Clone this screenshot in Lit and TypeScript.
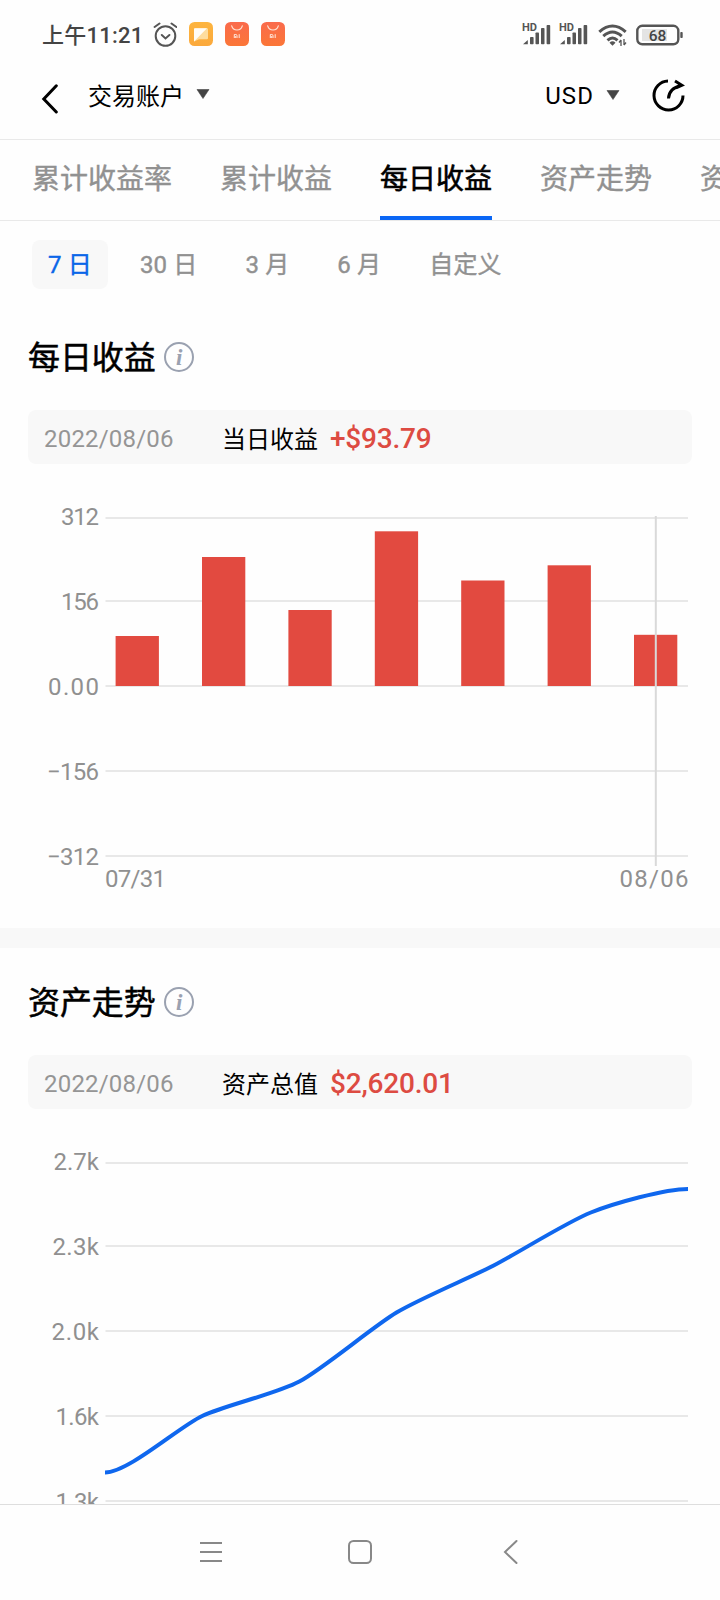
import { LitElement, html, css, svg } from "lit";
import { customElement, property } from "lit/decorators.js";

const TABS = ["累计收益率", "累计收益", "每日收益", "资产走势", "资产分布"];
const RANGES = ["7 日", "30 日", "3 月", "6 月", "自定义"];
const GRID = [18, 101, 186, 271, 356];

@customElement("status-bar")
class StatusBar extends LitElement {
  static styles = css`
    :host { display: flex; height: 70px; box-sizing: border-box; padding: 0 37px 0 42px; align-items: center; color: #444; }
    .time { font-size: 22px; font-weight: 500; line-height: 30px; letter-spacing: 0.25px; width: 111px; white-space: nowrap; padding-top: 1px; }
    .left { display: flex; gap: 12px; align-items: center; flex: 1; }
    .left svg { margin-top: -2px; }
    .right { display: flex; align-items: center; }
    .sig { margin-right: 8px; }
    .wifi { margin: 0 9px 0 2px; }
    svg { display: block; }
    .bat { font: 500 15.5px Roboto, sans-serif; fill: #444; }
    .hd { font: 700 10px Roboto, sans-serif; fill: #555; }
  `;
  signal() {
    return html`<svg class="sig" width="29" height="24" viewBox="0 0 29 24">
      <text class="hd" x="0" y="8" textLength="15" lengthAdjust="spacingAndGlyphs">HD</text>
      <g fill="#555"><path d="M1 21.300 5.800 17v4.300z" /><rect x="8" y="14" width="3.600" height="7.300" rx=".8" /><rect x="13.500" y="9.500" width="3.500" height="11.800" rx=".8" /><rect x="19" y="5" width="3.500" height="16.300" rx=".8" /><rect x="24.600" y="2" width="3.600" height="19.300" rx=".8" /></g>
    </svg>`;
  }
  bag(id: string) {
    return html`<svg width="24" height="24" viewBox="0 0 24 24">
      <defs><linearGradient id=${id} x2="0" y2="1"><stop stop-color="#fa6a4c" /><stop offset="1" stop-color="#fb7637" /></linearGradient></defs>
      <rect width="24" height="24" rx="5.500" fill="url(#${id})" />
      <path d="M6.700 3.800c1.600 5.600 9 5.600 10.600 0" fill="none" stroke="#ffe3d6" stroke-width="1.200" stroke-linecap="round" />
      <path d="M9.300 16v-3.500h1.500q1.200 0 1.200 1.200V16M10.700 16v-2M14.200 12.200V16" fill="none" stroke="#ffe9df" stroke-width="1" />
    </svg>`;
  }
  render() {
    return html`
      <span class="time">上午11:21</span>
      <div class="left">
        <svg width="24" height="26" viewBox="0 0 24 26" fill="none" stroke="#555" stroke-width="2" stroke-linecap="round">
          <circle cx="12.500" cy="15" r="9.800" /><path d="M8.800 14l3.700 3.400 3.900-3.400M1.600 6 6.500 2.500M18.500 2.500l4.900 3.500" />
        </svg>
        <svg width="24" height="24" viewBox="0 0 24 24">
          <defs><linearGradient id="y" y2="1" x2="0"><stop stop-color="#fdb53f" /><stop offset="1" stop-color="#fba93c" /></linearGradient></defs>
          <rect width="24" height="24" rx="5.500" fill="url(#y)" />
          <path d="M6 6.300h12q1 0 1 1v9q0 1-1 1h-8L5 19.500V7.300q0-1 1-1z" fill="#fedd9e" />
          <path d="M6 6.300h12L5 19.500V7.300q0-1 1-1z" fill="#fffdf8" />
        </svg>
        ${this.bag("a")}${this.bag("b")}
      </div>
      <div class="right">
        ${this.signal()}${this.signal()}
        <svg class="wifi" width="29" height="24" viewBox="0 0 29 24" fill="none" stroke="#555" stroke-width="3">
          <path d="M1.300 8.800Q14.500-2.800 27.700 8.800M5.300 13.200q9.200-8.400 18.400 0M9.500 17.300q5-4.600 10 0" />
          <path d="M11.500 19.700q3-2.800 6 0l-3 3z" fill="#555" stroke="none" />
          <path d="M23 17v6M26 16v6M23 17l-2 2.500M26 22l2-2.500" stroke-width="1.300" />
        </svg>
        <svg width="47" height="22" viewBox="0 0 47 22">
          <rect x="6" y="5" width="25" height="12" fill="#e4e4e4" />
          <rect x="1.300" y="1.800" width="41" height="18.500" rx="5" fill="none" stroke="#555" stroke-width="2.400" />
          <rect x="44.300" y="8" width="2.400" height="6" rx=".8" fill="#555" />
          <text class="bat" x="21.500" y="16.500" text-anchor="middle">68</text>
        </svg>
      </div>`;
  }
}

@customElement("page-header")
class PageHeader extends LitElement {
  static styles = css`
    :host { display: flex; height: 70px; box-sizing: border-box; border-bottom: 1px solid #e9e9e9; padding: 0 35px 0 41px; align-items: center; color: #000; font-size: 24px; }
    .label { line-height: 34px; margin-bottom: 16px; }
    .back { margin: 0 29px 11px 0; }
    .acct { margin-right: 12px; }
    .cur { margin-left: auto; margin-right: 12px; letter-spacing: 1.1px; margin-bottom: 17px; }
    .tri { margin-bottom: 21px; }
    .tri2 { margin-bottom: 19px; }
    .turn { margin: 0 0 18px 32px; }
    svg { display: block; flex: none; }
  `;
  tri(c: string) {
    return html`<svg class=${c} width="14" height="10" viewBox="0 0 14 10"><path d="M1 .5h12L7 9.500z" fill="#444" stroke="#444" stroke-width=".6" stroke-linejoin="round" /></svg>`;
  }
  render() {
    return html`
      <svg class="back" width="18" height="30" viewBox="0 0 18 30" fill="none" stroke="#000" stroke-width="3" stroke-linecap="round"><path d="M15.300 1.800 2.800 15l12.500 13" /></svg>
      <span class="label acct">交易账户</span>${this.tri("tri")}
      <span class="label cur">USD</span>${this.tri("tri2")}
      <svg class="turn" width="33" height="33" viewBox="0 0 33 33" fill="none" stroke="#000" stroke-width="3">
        <path d="M16 2A14.500 14.500 0 1 0 31 16.500" /><path d="M16.500 19.500Q17 9 29.500 6.500M23 2 30 6.300 24 9" stroke-width="3" />
      </svg>`;
  }
}

@customElement("section-head")
class SectionHead extends LitElement {
  @property() heading = "";
  @property() label = "";
  @property() value = "";
  static styles = css`
    :host { display: block; padding: 0 28px; }
    .title { display: flex; align-items: center; gap: 8px; height: 46px; font-size: 32px; line-height: 46px; color: #000; -webkit-text-stroke: 0.5px #000; }
    .title span { padding-top: 1px; letter-spacing: -0.1px; }
    .row { display: flex; align-items: center; height: 54px; margin-top: 30px; border-radius: 8px; background: #f8f8f8; padding-left: 16px; font-size: 24px; }
    .date { color: #959595; width: 178px; letter-spacing: 0.2px; padding-top: 3px; }
    .label { color: #000; width: 108px; }
    .value { color: #dd4b42; font-size: 28px; font-weight: 500; letter-spacing: -0.2px; padding-top: 2px; }
    svg { display: block; }
    .i { font: italic 700 23px "Liberation Serif", serif; fill: #9aa1b0; -webkit-text-stroke: 0; }
  `;
  render() {
    return html`
      <div class="title"><span>${this.heading}</span>
        <svg width="30" height="30" viewBox="0 0 30 30">
          <circle cx="15" cy="15" r="14" fill="none" stroke="#9aa1b0" stroke-width="2" />
          <text class="i" x="15.300" y="22.500" text-anchor="middle">i</text>
        </svg>
      </div>
      <div class="row"><span class="date">2022/08/06</span><span class="label">${this.label}</span><span class="value">${this.value}</span></div>`;
  }
}

const chartStyles = css`
  :host { display: block; }
  svg { display: block; }
  text { font: 400 24px Roboto, sans-serif; fill: #909090; }
`;

function grid(labels: [string, number][]) {
  return labels.map(([l, w], i) => svg`
    <rect x="105.500" y=${GRID[i] - 1} width="582.500" height="2" fill="#e8e8e8"></rect>
    <text x=${99 - w} y=${GRID[i] + (i === 0 ? 7 : 9)} textLength=${w}>${l}</text>`);
}

@customElement("bar-chart")
class BarChart extends LitElement {
  static styles = chartStyles;
  tops = [136, 57, 110, 31.300, 80.500, 65.300, 134.800];
  render() {
    return html`<svg width="720" height="428" viewBox="0 0 720 428">
      ${grid([["312", 38], ["156", 38], ["0.00", 51], ["−156", 52], ["−312", 52]])}
      ${this.tops.map((t, i) => svg`<rect x=${115.600 + i * 86.400} y=${t} width="43.300" height=${186 - t} fill="#e24a40"></rect>`)}
      <rect x="654.800" y="16" width="2" height="350" fill="#d9d9d9" />
      <text x="105" y="386.500" textLength="61">07/31</text>
      <text x="619.500" y="386.500" textLength="69">08/06</text>
    </svg>`;
  }
}

@customElement("trend-chart")
class TrendChart extends LitElement {
  static styles = chartStyles;
  ys = [327.500, 271, 236.500, 167.500, 120.500, 67.500, 44];
  path() {
    const step = 97.170;
    const n = this.ys.length;
    const slope = this.ys.map((_, i) => (i === 0 || i === n - 1 ? 0 : (this.ys[i + 1] - this.ys[i - 1]) / (2 * step)));
    const x = (i: number) => 105 + i * step;
    let d = `M${x(0)} ${this.ys[0]}`;
    for (let i = 1; i < n; i++) {
      const a = step * 0.24;
      d += `C${x(i - 1) + a} ${this.ys[i - 1] + slope[i - 1] * a} ${x(i) - a} ${this.ys[i] - slope[i] * a} ${x(i)} ${this.ys[i]}`;
    }
    return d;
  }
  render() {
    return html`<svg width="720" height="428" viewBox="0 0 720 428">
      ${grid([["2.7k", 45.5], ["2.3k", 46.5], ["2.0k", 47.5], ["1.6k", 43.5], ["1.3k", 43.5]])}
      <path d=${this.path()} fill="none" stroke="#0f67ee" stroke-width="4" />
    </svg>`;
  }
}

@customElement("app-root")
class AppRoot extends LitElement {
  static styles = css`
    :host { display: flex; flex-direction: column; width: 720px; height: 1600px; overflow: hidden; background: #fefefe; font-family: Roboto, "Noto Sans CJK SC", sans-serif; }
    .tabs { display: flex; flex: none; gap: 48px; height: 81px; box-sizing: border-box; border-bottom: 1px solid #e9e9e9; padding-left: 32px; overflow: hidden; }
    .tab { flex: none; box-sizing: border-box; height: 80px; font-size: 28px; line-height: 80px; color: #919191; -webkit-text-stroke: 0.4px; border-bottom: 4px solid transparent; }
    .tab.on { color: #000; border-color: #0a66f5; -webkit-text-stroke: 0.6px; }
    .ranges { display: flex; gap: 16px; padding: 19px 32px 0; height: 49px; }
    .range { padding: 0 16px; border-radius: 8px; font-size: 24px; line-height: 51px; height: 49px; color: #919191; -webkit-text-stroke: 0.4px; letter-spacing: 0.15px; white-space: nowrap; }
    .range.on { color: #0a66e8; background: #f8f8f8; }
    main { flex: 1; min-height: 0; overflow: hidden; }
    .first { margin-top: 45px; }
    .second { margin-top: 31px; }
    .chart { display: block; margin-top: 36px; }
    .band { height: 20px; background: #f8f8f8; }
    .nav { flex: none; height: 96px; box-sizing: border-box; border-top: 1px solid #dedede; display: flex; justify-content: center; gap: 124px; padding: 34px 0 0 0; }
    .nav svg { display: block; }
  `;
  render() {
    return html`
      <status-bar></status-bar>
      <page-header></page-header>
      <div class="tabs">${TABS.map((t, i) => html`<div class="tab ${i === 2 ? "on" : ""}">${t}</div>`)}</div>
      <main>
        <div class="ranges">${RANGES.map((t, i) => html`<div class="range ${i === 0 ? "on" : ""}">${t}</div>`)}</div>
        <section-head class="first" heading="每日收益" label="当日收益" value="+$93.79"></section-head>
        <bar-chart class="chart"></bar-chart>
        <div class="band"></div>
        <section-head class="second" heading="资产走势" label="资产总值" value="$2,620.01"></section-head>
        <trend-chart class="chart"></trend-chart>
      </main>
      <div class="nav">
        <svg width="24" height="26" viewBox="0 0 24 26" stroke="#888" stroke-width="2"><path d="M1 4h22M1 13h22M1 22h22" /></svg>
        <svg width="26" height="26" viewBox="0 0 26 26" fill="none" stroke="#888" stroke-width="2"><rect x="2" y="2" width="22" height="22" rx="4.500" /></svg>
        <svg width="24" height="26" viewBox="0 0 24 26" fill="none" stroke="#888" stroke-width="2" stroke-linecap="round"><path d="M19.500 2 8 13l11.500 11" /></svg>
      </div>`;
  }
}
